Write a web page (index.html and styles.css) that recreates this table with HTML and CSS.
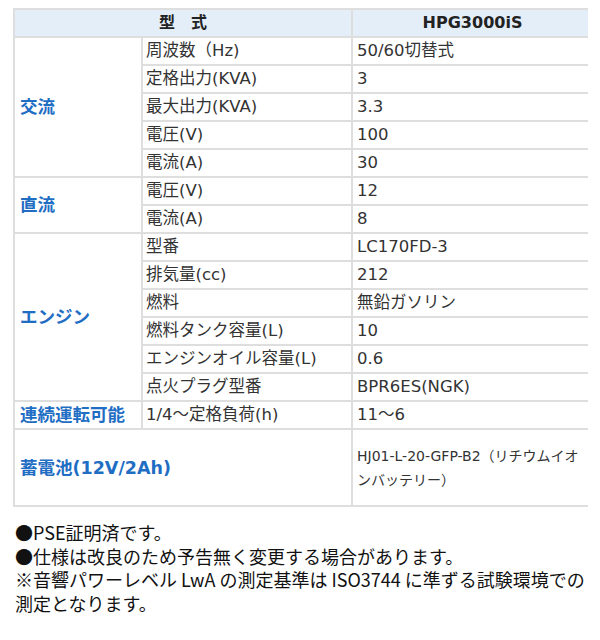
FILE: index.html
```html
<!DOCTYPE html>
<html lang="ja">
<head>
<meta charset="utf-8">
<link rel="stylesheet" href="styles.css">
</head>
<body>
<div class="page">
<table class="spec">
  <colgroup><col class="c1"><col class="c2"><col class="c3"></colgroup>
  <thead>
    <tr><th colspan="2" class="h-model">型　式</th><th class="h-name">HPG3000iS</th></tr>
  </thead>
  <tbody>
    <tr><td rowspan="5" class="grp">交流</td><td>周波数（Hz)</td><td>50/60切替式</td></tr>
    <tr><td>定格出力(KVA)</td><td>3</td></tr>
    <tr><td>最大出力(KVA)</td><td>3.3</td></tr>
    <tr><td>電圧(V)</td><td>100</td></tr>
    <tr><td>電流(A)</td><td>30</td></tr>
    <tr><td rowspan="2" class="grp">直流</td><td>電圧(V)</td><td>12</td></tr>
    <tr><td>電流(A)</td><td>8</td></tr>
    <tr><td rowspan="6" class="grp">エンジン</td><td>型番</td><td>LC170FD-3</td></tr>
    <tr><td>排気量(cc)</td><td>212</td></tr>
    <tr><td>燃料</td><td>無鉛ガソリン</td></tr>
    <tr><td>燃料タンク容量(L)</td><td>10</td></tr>
    <tr><td>エンジンオイル容量(L)</td><td>0.6</td></tr>
    <tr><td>点火プラグ型番</td><td>BPR6ES(NGK)</td></tr>
    <tr><td class="grp">連続運転可能</td><td>1/4～定格負荷(h)</td><td>11～6</td></tr>
    <tr class="battery"><td colspan="2" class="grp">蓄電池(12V/2Ah)</td><td class="small">HJ01-L-20-GFP-B2（リチウムイオンバッテリー）</td></tr>
  </tbody>
</table>
<div class="notes">
  <p>●PSE証明済です。</p>
  <p>●仕様は改良のため予告無く変更する場合があります。</p>
  <p>※音響パワーレベル LwA の測定基準は ISO3744 に準ずる試験環境での測定となります。</p>
</div>
</div>
</body>
</html>
```
FILE: styles.css
```css
html, body {
  margin: 0;
  padding: 0;
  background: #ffffff;
}
.page {
  padding: 8px 0 0 13px;
}
.spec {
  border-collapse: collapse;
  table-layout: fixed;
  width: 574px;
  font-family: "DejaVu Sans", "Noto Sans CJK JP", sans-serif;
  color: #333333;
  font-size: 16.5px;
}
.spec .c1 { width: 128px; }
.spec .c2 { width: 210px; }
.spec .c3 { width: 236px; }
.spec th, .spec td {
  border: 2px solid #dedede;
  padding: 0 0 0 3px;
  height: 26px;
  text-align: left;
  vertical-align: middle;
  line-height: 22px;
  white-space: nowrap;
}
.spec tr > :last-child {
  border-right: none;
  padding-left: 4px;
}
.spec thead th {
  background: #e4eef9;
  font-weight: bold;
  text-align: center;
  color: #222222;
  font-size: 16px;
  height: 26px;
  padding: 0;
}
.spec td.grp {
  color: #1f6ec4;
  font-weight: bold;
  font-size: 17.5px;
  padding-left: 5px;
}
.spec tr.battery td {
  height: 75px;
}
.spec td.small {
  font-size: 14px;
  line-height: 24px;
  white-space: normal;
  padding-right: 2px;
}
.notes {
  margin-top: 14px;
  margin-left: 2px;
  font-family: "Noto Sans CJK JP", sans-serif;
  font-size: 18px;
  line-height: 23.5px;
  color: #111111;
  width: 578px;
}
.notes p {
  margin: 0;
}
```
